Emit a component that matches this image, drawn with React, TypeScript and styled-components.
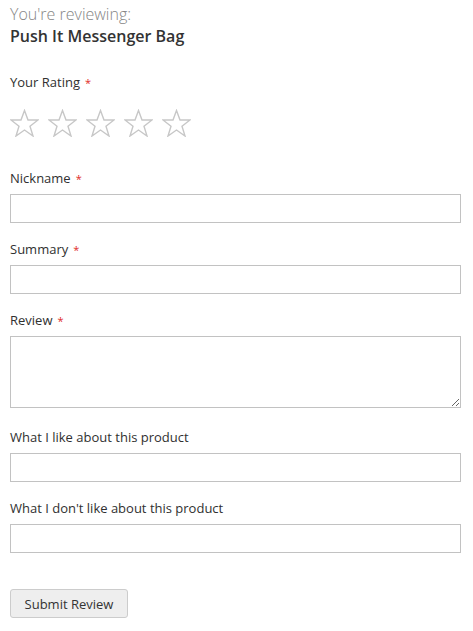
import React from "react";
import styled, { createGlobalStyle } from "styled-components";

const Global = createGlobalStyle`
  html, body { margin: 0; padding: 0; background: #fff; }
  body { font-family: "Open Sans", "Liberation Sans", sans-serif; color: #333; }
  * { box-sizing: border-box; }
`;

const Form = styled.form`
  display: flex;
  flex-direction: column;
  width: 451px;
  margin-left: 10px;
  padding-top: 4px;
`;

const Legend = styled.div`
  display: flex;
  flex-direction: column;
  margin-bottom: 26px;
`;

const Reviewing = styled.span`
  font-size: 16px;
  line-height: 20px;
  color: #858585;
  font-weight: 300;
`;

const Product = styled.strong`
  font-size: 16px;
  line-height: 20px;
  font-weight: 600;
  color: #333;
  margin-top: 2px;
`;

const Field = styled.div<{ $gap: number }>`
  display: flex;
  flex-direction: column;
  margin-bottom: ${(p) => p.$gap}px;
`;

const Label = styled.label`
  display: block;
  height: 20px;
  font-size: 13px;
  line-height: 20px;
  font-weight: 400;
  color: #303030;
  margin-bottom: 6px;
`;

const Req = styled.span`
  color: #e02b27;
  font-size: 11px;
  line-height: 1;
  margin-left: 5px;
`;

const Stars = styled.div`
  display: flex;
  gap: 9px;
  padding-top: 11px;
`;

const Input = styled.input`
  display: block;
  width: 100%;
  height: 29px;
  border: 1px solid #c2c2c2;
  background: #fff;
  margin: 0;
  font: inherit;
`;

const TextArea = styled.textarea`
  display: block;
  width: 100%;
  height: 72px;
  border: 1px solid #c2c2c2;
  background: #fff;
  margin: 0;
  font: inherit;
  resize: vertical;
`;

const Button = styled.button`
  align-self: flex-start;
  width: 118px;
  height: 29px;
  background: #eee;
  border: 1px solid #ccc;
  border-radius: 3px;
  color: #333;
  font-family: "Open Sans", "Liberation Sans", sans-serif;
  font-size: 13px;
  font-weight: 400;
  padding: 0;
  cursor: pointer;
`;

const Star = () => (
  <svg width="29" height="28" viewBox="0 0 29 28">
    <polygon
      points="14.5,1.5 18,11 28,11 20,17.2 23,27 14.5,21 6,27 9,17.2 1,11 11,11"
      fill="none"
      stroke="#c7c7c7"
      strokeWidth="1.4"
      strokeLinejoin="miter"
    />
  </svg>
);

export default function App() {
  return (
    <>
      <Global />
      <Form onSubmit={(e) => e.preventDefault()}>
        <Legend>
          <Reviewing>You're reviewing:</Reviewing>
          <Product>Push It Messenger Bag</Product>
        </Legend>
        <Field $gap={31}>
          <Label>
            Your Rating<Req>*</Req>
          </Label>
          <Stars>
            {[0, 1, 2, 3, 4].map((i) => (
              <Star key={i} />
            ))}
          </Stars>
        </Field>
        <Field $gap={16}>
          <Label>
            Nickname<Req>*</Req>
          </Label>
          <Input type="text" />
        </Field>
        <Field $gap={16}>
          <Label>
            Summary<Req>*</Req>
          </Label>
          <Input type="text" />
        </Field>
        <Field $gap={19}>
          <Label>
            Review<Req>*</Req>
          </Label>
          <TextArea />
        </Field>
        <Field $gap={16}>
          <Label>What I like about this product</Label>
          <Input type="text" />
        </Field>
        <Field $gap={36}>
          <Label>What I don't like about this product</Label>
          <Input type="text" />
        </Field>
        <Button type="submit">Submit Review</Button>
      </Form>
    </>
  );
}
